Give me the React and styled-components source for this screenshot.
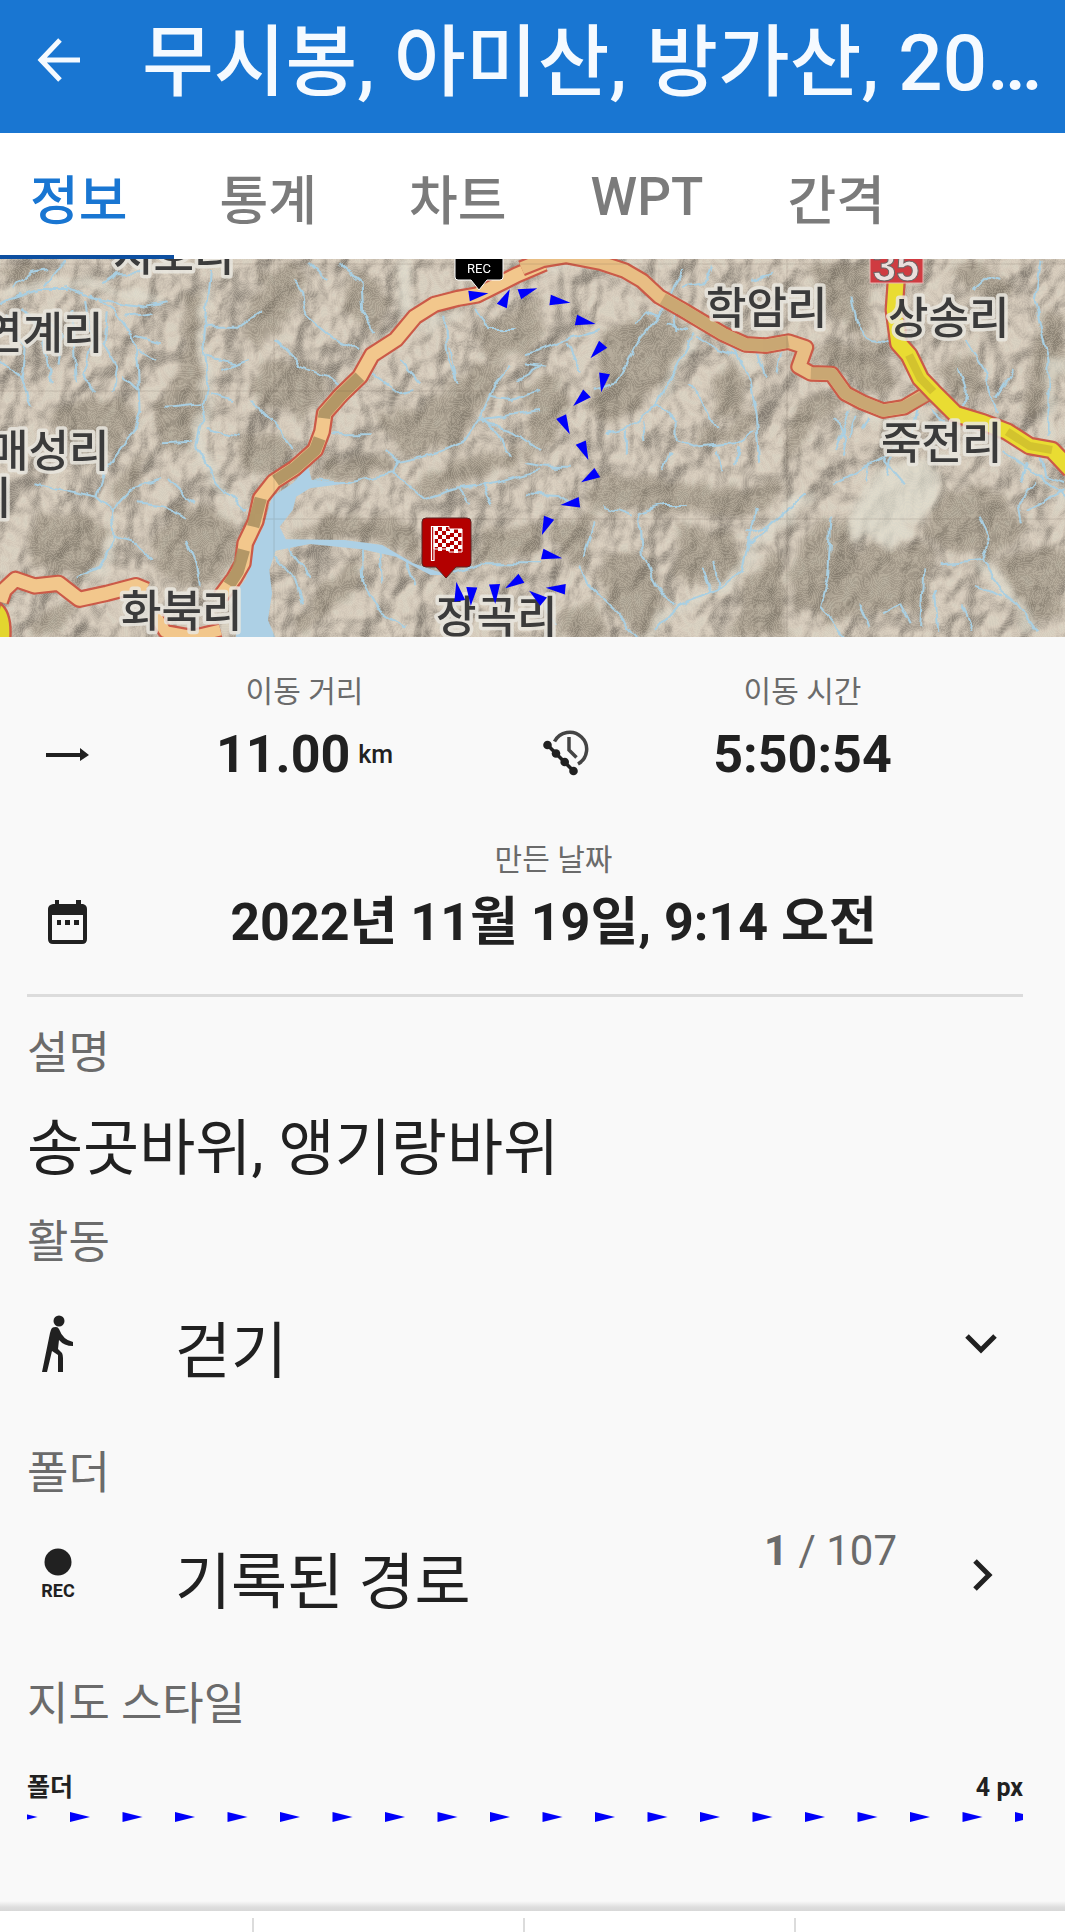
import React, { useState } from "react";
import styled, { createGlobalStyle } from "styled-components";

const ink = "#212121";
const muted = "#6b6b6b";
const blue = "#1976d2";

const GlobalStyle = createGlobalStyle`
  *, *::before, *::after { box-sizing: border-box; }
  body {
    margin: 0;
    background: #f9f9f9;
    color: ${ink};
    font-family: Roboto, "Noto Sans CJK KR", sans-serif;
  }
  h1, h2, p, dl, dd, dt { margin: 0; font-weight: 400; }
  button, select { font: inherit; color: inherit; background: none; border: 0; padding: 0; }
  svg { display: block; }
`;

const Header = styled.header`
  display: flex;
  align-items: center;
  gap: 60px;
  height: 133px;
  padding: 0 10px 14px 36px;
  background: ${blue};
  color: #f5faff;
`;

const BackButton = styled.button`
  flex: none;
  width: 46px;
  height: 46px;
`;

const Title = styled.h1`
  flex: 1;
  min-width: 0;
  padding-top: 8px;
  overflow: hidden;
  white-space: nowrap;
  font-size: 78px;
  line-height: 110px;
  font-weight: 500;
`;

const Tabs = styled.nav`
  display: flex;
  height: 126px;
  background: #fff;
  overflow: hidden;
`;

const Tab = styled.button`
  flex: none;
  padding: 6px ${(p) => (p.$latin ? 38 : 46)}px 0;
  border-bottom: 4px solid ${(p) => (p.$active ? "#0d4fa0" : "transparent")};
  color: ${(p) => (p.$active ? blue : "#7b7b7b")};
  font-size: 53px;
  font-weight: 500;

  &:first-child { padding-left: 30px; }
`;

const MapFrame = styled.section`
  svg { width: 100%; height: auto; }
`;

const Stats = styled.dl`
  display: grid;
  grid-template-columns: 1fr 1fr;
  row-gap: 62px;
  margin: 0 42px 0 27px;
  padding: 37px 0 46px;
  border-bottom: 3px solid #dcdcdc;
`;

const Stat = styled.div`
  grid-column: ${(p) => (p.$wide ? "1 / -1" : "auto")};
  display: grid;
  grid-template-columns: 44px 1fr;
  row-gap: 18px;
  padding: 0 5px 0 18px;
  align-items: center;
  text-align: center;
`;

const StatIcon = styled.dd`
  grid-row: 2;
`;

const StatLabel = styled.dt`
  grid-column: 2;
  color: ${muted};
  font-size: 30px;
  line-height: 36px;
`;

const StatValue = styled.dd`
  grid-column: 2;
  padding-top: 2px;
  font-size: 52px;
  line-height: 50px;
  font-weight: 700;
`;

const Unit = styled.span`
  margin-left: 8px;
  font-size: 25px;
  font-weight: 500;
  vertical-align: 9px;
  line-height: 1;
`;

const Details = styled.main`
  padding: 33px 42px 78px 27px;
`;

const SectionLabel = styled.h2`
  color: ${muted};
  font-size: 45px;
  line-height: 48px;
`;

const Description = styled.p`
  margin: 35px 0 34px;
  font-size: 61px;
  line-height: 72px;
`;

const Row = styled.div`
  display: flex;
  align-items: center;
  width: 100%;
  height: 154px;
  margin-bottom: 29px;
  padding-right: 26px;
  text-align: left;
`;

const RowIcon = styled.span`
  flex: none;
  display: flex;
  flex-direction: column;
  align-items: center;
  gap: 4px;
  width: 62px;
  margin-right: 86px;
  font-size: 18px;
  line-height: 22px;
  font-weight: 700;
`;

const RowSelect = styled.select`
  flex: 1;
  appearance: none;
  padding-top: 16px;
  font-size: 61px;
  line-height: 72px;
`;

const RowText = styled.span`
  flex: 1;
  padding-top: 16px;
  font-size: 61px;
  line-height: 72px;
`;

const Count = styled.span`
  margin-right: 74px;
  padding-bottom: 48px;
  color: ${muted};
  font-size: 42px;
  line-height: 48px;
`;

const StyleCaption = styled.div`
  display: flex;
  justify-content: space-between;
  margin: 43px 0 7px;
  font-size: 25px;
  line-height: 32px;
  font-weight: 700;
`;

const BottomShadow = styled.div`
  height: 10px;
  background: linear-gradient(#f9f9f9, #dedede 60%, #d8d8d8);
`;

const BottomBar = styled.footer`
  display: grid;
  grid-template-columns: 254fr 271fr 271fr 269fr;
  height: 22px;
  padding-top: 7px;
  background: #fff;
`;

const BottomCell = styled.div`
  border-right: 2px solid #dcdcdc;
  &:last-child { border-right: 0; }
`;

/* ---------- map drawing ---------- */

const roadWest =
  "M640 1040L680 985 705 940 712 880 742 815 757 745 795 695 855 655 915 600 935 545 943 490 990 435 1045 380 1080 315 1150 268 1205 200 1262 163 1330 145 1385 135 1430 112 1500 75 1580 40";
const roadFork = "M0 1055L12 1020 45 988 100 1008 170 1000 230 1048 310 1030 395 1007 425 1020";
const roadSouth = "M450 1095L480 1145 560 1160 640 1140";
const roadEast =
  "M-10 55L50 30 120 18 220 38 290 62 340 92 390 140 450 175 515 215 575 252 640 283 700 287 765 275 815 292 795 350 830 370 890 372 930 430 980 457 1040 482 1100 472 1165 432";
const highway =
  "M1078 90L1072 180 1085 280 1115 315 1148 385 1185 425 1250 492 1330 517 1400 545 1465 588 1530 600 1585 660";

const shadeWest = [
  "M540 120L590 140 580 300 590 420 560 600 500 620 440 540 450 480 520 360Z",
  "M700 250L760 60 860 40 900 100 840 180 800 240 740 290Z",
  "M1000 60L1060 60 1130 150 1100 240 1060 250 1000 160Z",
  "M760 330L860 330 960 400 880 520 800 480 720 440Z",
  "M1080 480L1220 480 1380 340 1480 330 1400 460 1340 580 1180 620 1120 560Z",
  "M930 640L1120 610 1140 660 1040 700 920 690Z",
  "M1180 720L1300 640 1520 590 1500 640 1360 700 1230 745Z",
  "M830 850L960 800 1140 800 1220 870 1200 930 1060 870 860 870Z",
  "M860 1090L960 990 1040 920 1050 1010 960 1090 860 1150Z",
  "M100 800L250 780 310 860 290 960 220 990 120 960 90 880Z",
  "M330 700L420 600 410 700 340 760Z",
  "M160 470L360 440 400 500 320 620 240 640 170 560Z",
  "M420 880L520 760 680 800 700 900 640 1000 560 1010 480 970Z",
  "M80 1150L140 1070 220 1060 200 1120 120 1165Z",
  "M600 880L660 840 660 980 600 1000Z",
  "M0 60L80 40 120 80 60 110Z",
  "M1380 960L1400 840 1568 830 1568 900 1480 930Z",
  "M1380 240L1568 140 1568 300 1420 330Z",
  "M700 560L820 540 840 640 760 680 700 640Z",
];
const shadeEast = [
  "M220 260L300 200 420 200 480 260 440 350 340 460 250 520 180 480 210 400Z",
  "M0 400L100 360 120 460 90 560 0 640Z",
  "M510 540L600 520 660 470 660 540 580 580 500 580Z",
  "M540 400L600 330 640 400 620 500 560 500Z",
  "M180 720L240 670 480 700 640 720 740 690 720 760 620 800 500 790 330 770 200 800Z",
  "M60 830L200 790 180 900 160 950 100 900Z",
  "M760 960L850 810 930 820 960 900 1140 880 1180 900 1160 1100 1040 1080 900 1120 840 1080 780 1100Z",
  "M780 480L860 420 960 460 860 500 760 640Z",
  "M830 320L900 270 1020 320 1080 400 1040 450 960 400Z",
  "M820 60L1000 30 1000 240 940 250 880 160Z",
  "M960 260L1060 280 1050 330 980 290Z",
  "M1180 780L1300 690 1380 740 1460 830 1400 900 1320 920 1240 900 1160 860Z",
  "M1460 330L1520 160 1568 200 1568 320 1500 480 1450 520Z",
  "M1220 60L1330 40 1420 120 1380 160Z",
  "M200 960L260 900 360 920 400 1040 380 1140 300 1140 220 1030Z",
  "M450 820L600 860 640 940 560 1010 440 980Z",
  "M640 980L740 900 760 1160 600 1160Z",
  "M1200 360L1300 300 1340 420 1250 460Z",
  "M1370 930L1568 880 1568 1100 1440 1120Z",
  "M100 1100L200 1040 260 1160 80 1165Z",
];

const valleyWest = [
  "M0 150L80 110 190 90 260 110 330 120 480 160",
  "M600 120L585 260 600 400 575 580 620 690 715 780",
  "M1170 30L1175 190",
  "M240 980L300 960 330 870",
  "M1100 270L1330 190",
];
const valleyEast = [
  "M500 220L480 280 385 460",
  "M560 240L640 350",
  "M900 560L960 500 1100 490 1160 500",
  "M1400 600L1500 680 1568 760",
  "M1330 920L1400 1030 1480 1140",
  "M340 1160L430 1070 580 1010 700 860 830 720",
  "M0 50L140 30 240 50",
  "M1568 330L1520 360 1520 560",
];

const streamsWest = [
  "M190 110L240 130 300 150 420 170 490 160",
  "M130 110L190 30",
  "M20 150L110 120 200 120",
  "M0 160L60 130M40 110L90 70 140 60M300 100L340 70 420 70",
  "M610 60L590 260 605 400 570 590 630 700 715 780",
  "M260 130L330 180 380 250 400 330 405 480 390 540 300 670 280 740 325 780 330 870 290 950 220 980",
  "M100 700L190 720 280 740",
  "M325 780L380 720 470 690",
  "M590 230L690 230 760 180",
  "M980 40L1050 100 1055 190 1090 250",
  "M850 90L880 130 890 200 960 260 1040 300",
  "M800 270L860 330 870 350 950 380 1000 420",
  "M730 450L800 520 850 600",
  "M905 690L1010 700 1140 670 1160 635 1270 610 1350 570 1390 510 1440 400 1480 350",
  "M1120 600L1160 635",
  "M1140 670L1230 745 1330 715 1440 700 1568 660",
  "M1390 510L1480 540 1568 600",
  "M1390 510L1568 480",
  "M1420 440L1480 450 1568 420M1400 500L1450 560 1480 620M1330 715L1360 760M1400 700L1430 760",
  "M960 550L1080 550",
  "M1385 170L1420 240 1500 240",
  "M1290 200L1300 320 1330 400",
  "M1330 400L1310 290",
  "M1050 890L1055 1000 1100 1080 1180 1130",
  "M540 870L570 940 580 1010",
  "M1320 970L1400 940 1568 940",
  "M60 170L120 250 150 400",
  "M0 330L60 380 90 470",
  "M210 180L220 400",
  "M20 200L70 290 60 380M130 200L180 260 170 350M250 150L270 280 240 370 280 430M310 190L300 280 340 350 330 420",
  "M370 200L440 190M390 260L470 280M400 300L450 330M400 420L360 380",
  "M470 580L560 575M480 470L590 460M610 430L680 450M600 540L690 560M600 320L680 340",
  "M1080 370L1160 430 1200 420M1160 330L1220 400M1500 390L1568 350",
  "M900 40L950 90",
  "M640 360L720 330",
  "M490 690L560 760",
  "M800 920L860 990 880 1060M840 900L900 980M1100 890L1110 1000M1180 930L1200 1000",
  "M330 860L400 880 440 930M400 760L480 770 540 800",
];
const streamsEast = [
  "M460 60L430 110 400 180 320 290 270 400 200 420",
  "M490 250L450 330 385 460 300 530 240 550",
  "M385 460L440 520 440 570 490 590 610 580 665 540",
  "M600 290L650 380 670 500 680 640",
  "M480 400L530 480 560 540",
  "M390 200L350 180 320 220M410 220L470 240M430 190L440 240M500 260L560 300 620 320M680 310L700 380M740 310L730 370",
  "M945 140L960 220 1000 270 1080 280",
  "M1280 270L1340 370 1370 490",
  "M1260 350L1280 420 1270 480M1300 120L1340 80 1380 90M1420 360L1370 440",
  "M1500 30L1480 150 1520 330 1520 560",
  "M0 310L120 270 220 240",
  "M120 280L160 370",
  "M0 730L100 735 130 760M0 640L60 650 130 650M0 340L60 350",
  "M1140 480L1120 560 1030 630 900 700",
  "M1040 620L1100 700M1000 640L990 700M1060 620L1050 680",
  "M940 480L900 600",
  "M900 510L930 560 920 620M960 500L940 560M1000 500L980 540M1180 480L1220 520",
  "M1390 600L1568 740",
  "M1460 640L1440 700M1500 620L1510 680 1568 700M1480 700L1430 760 1440 820",
  "M1320 800L1350 860 1330 930 1380 1020 1430 1060 1490 1150",
  "M1330 930L1210 940",
  "M330 790L400 765 470 765",
  "M330 790L340 920 380 1000 430 1070",
  "M160 950L180 1000 260 1080 330 1160",
  "M380 1140L440 1070 560 1020 630 960 650 880 740 800 820 730",
  "M510 950L540 1030M550 930L560 1020M640 850L700 830M670 780L650 880",
  "M290 540L290 620M340 510L350 570M420 610L400 660M560 600L570 670M620 590L610 640",
  "M890 800L880 980 860 1070 930 1160",
  "M1160 960L1150 1130",
  "M970 1060L1000 1130M1040 1090L1090 1060 1120 1120M1190 1020L1200 1140M1270 1060L1300 1140",
  "M1460 780L1568 720",
  "M1310 1010L1390 1040",
  "M540 50L520 100 450 110",
  "M660 90L720 70",
  "M200 820L170 920M230 770L310 800M60 1060L90 1130",
];

/* each entry: base centre x, y, then tip x, y */
const arrowsWest = [
  [1362, 138, 1418, 130],
  [1457, 168, 1480, 118],
  [1508, 133, 1560, 115],
  [1335, 1053, 1325, 995],
  [1370, 1012, 1367, 1068],
  [1436, 1003, 1438, 1062],
  [1514, 985, 1467, 1015],
];
const arrowsEast = [
  [73, 150, 132, 158],
  [148, 210, 205, 222],
  [227, 283, 190, 325],
  [231, 370, 221, 427],
  [180, 430, 140, 468],
  [105, 500, 130, 553],
  [162, 578, 184, 630],
  [210, 668, 163, 697],
  [158, 757, 103, 765],
  [70, 803, 49, 855],
  [50, 912, 108, 925],
  [117, 1018, 60, 1013],
  [54, 1055, 12, 1022],
];

const places = [
  ["지호리", 113, 12],
  ["연계리", -18, 90],
  ["매성리", -12, 208],
  ["리", -29, 255],
  ["화북리", 121, 368],
  ["장곡리", 436, 374],
  ["학암리", 706, 65],
  ["상송리", 888, 75],
  ["죽전리", 881, 200],
];

function Arrow({ at: [x1, y1, x2, y2] }) {
  const len = Math.hypot(x2 - x1, y2 - y1);
  const nx = (-(y2 - y1) / len) * 16;
  const ny = ((x2 - x1) / len) * 16;
  return <polygon points={`${x1 + nx},${y1 + ny} ${x2},${y2} ${x1 - nx},${y1 - ny}`} />;
}

function Strokes({ paths }) {
  return paths.map((d) => <path key={d} d={d} />);
}

function Road({ d, width, color }) {
  return (
    <g fill="none" strokeLinejoin="round">
      <path d={d} stroke="#cb5a48" strokeWidth={width} />
      <path d={d} stroke={color} strokeWidth={width - 13} />
    </g>
  );
}

const westSheet = "translate(0 -9) scale(.3444 .3333)";
const eastSheet = "translate(525 -9) scale(.3444 .3333)";
const contourSteps = Array.from({ length: 90 }, (_, i) => (i % 2 ? 1 : 0)).join(" ");

function RouteMap() {
  const checks = [];
  for (let r = 0; r < 6; r++)
    for (let c = 0; c < 7; c++)
      if ((r + c) % 2 === 0) checks.push([434 + c * 4, 268 + r * 4 + (c > 3 ? 2 : 0)]);
  return (
    <svg viewBox="0 0 1065 378" role="img" aria-label="경로 지도">
      <defs>
        <filter id="relief" x="0" y="0" width="100%" height="100%" colorInterpolationFilters="sRGB">
          <feTurbulence type="fractalNoise" baseFrequency=".026 .02" numOctaves="3" seed="11" />
          <feColorMatrix values="0 0 0 0 0  0 0 0 0 0  0 0 0 0 0  1 0 0 0 0" />
          <feDiffuseLighting surfaceScale="20" diffuseConstant="1.1" lightingColor="#f4eadc">
            <feDistantLight azimuth="225" elevation="52" />
          </feDiffuseLighting>
        </filter>
        <filter id="contours" x="0" y="0" width="100%" height="100%" colorInterpolationFilters="sRGB">
          <feTurbulence type="fractalNoise" baseFrequency=".026 .02" numOctaves="2" seed="11" />
          <feColorMatrix values="0 0 0 0 .93  0 0 0 0 .89  0 0 0 0 .82  1 0 0 0 0" />
          <feComponentTransfer>
            <feFuncA type="discrete" tableValues={contourSteps} />
          </feComponentTransfer>
        </filter>
        <filter id="soft" x="-10%" y="-10%" width="120%" height="120%">
          <feTurbulence type="fractalNoise" baseFrequency=".05" numOctaves="2" seed="4" result="n" />
          <feDisplacementMap in="SourceGraphic" in2="n" xChannelSelector="R" yChannelSelector="G" scale="22" />
          <feGaussianBlur stdDeviation="3" />
        </filter>
        <filter id="wander">
          <feTurbulence type="fractalNoise" baseFrequency=".06" numOctaves="2" seed="7" result="n" />
          <feDisplacementMap in="SourceGraphic" in2="n" xChannelSelector="R" yChannelSelector="G" scale="9" />
        </filter>
      </defs>
      <rect width="1065" height="378" fill="#c4b9aa" />
      <rect width="1065" height="378" filter="url(#relief)" opacity=".3" />
      <g filter="url(#soft)" fill="#857b6c" opacity=".55">
        <g transform={westSheet}><Strokes paths={shadeWest} /></g>
        <g transform={eastSheet}><Strokes paths={shadeEast} /></g>
      </g>
      <g filter="url(#soft)" fill="none" stroke="#dedccf" strokeWidth="26" opacity=".75">
        <g transform={westSheet}><Strokes paths={valleyWest} /></g>
        <g transform={eastSheet}>
          <Strokes paths={valleyEast} />
          <path fill="#dedccf" d="M940 840L1020 680 1160 640 1200 700 1140 800 1060 880Z" />
        </g>
      </g>
      <rect width="1065" height="378" filter="url(#contours)" opacity=".2" />
      <g filter="url(#wander)" fill="none" stroke="#a9cfe2" strokeLinejoin="round" strokeWidth="6">
        <g transform={westSheet}><Strokes paths={streamsWest} /></g>
        <g transform={eastSheet}><Strokes paths={streamsEast} /></g>
      </g>
      <g transform={westSheet}>
        <path
          fill="#add0e5"
          d="M895 650L905 690 1010 700 900 715 860 740 850 780 812 830 830 868 1000 870 1110 885 1200 940 1300 975 1250 975 1150 920 1050 898 900 882 800 902 782 960 790 1030 778 1110 800 1165 685 1165 690 1020 715 985 730 900 765 830 790 740 850 700Z"
        />
        <Road d={roadFork} width={52} color="#f2c78c" />
        <Road d={roadSouth} width={46} color="#f2c78c" />
        <path d="M0 1060Q35 1085 30 1165L-20 1165Z" fill="#e3d62f" stroke="#cb5a48" strokeWidth="7" />
        <Road d={roadWest} width={52} color="#f2c78c" />
        <g fill="none" stroke="#a98f60" strokeWidth="36" strokeLinejoin="round" opacity=".85">
          <path d="M665 1005L690 965 708 900" />
          <path d="M735 830L757 745" />
          <path d="M800 692L855 655 915 600 928 565" />
          <path d="M941 505L943 490 990 435 1045 380" />
        </g>
      </g>
      <g transform={eastSheet}>
        <Road d={roadEast} width={50} color="#e8be84" />
        <g fill="none" stroke="#bd9e6c" strokeWidth="36" strokeLinejoin="round" opacity=".7">
          <path d="M400 147L450 175 515 215 575 252 640 283 700 287 765 275" />
          <path d="M830 370L890 372 930 430 980 457 1040 482 1100 472 1165 436" />
        </g>
        <Road d={highway} width={56} color="#e9dc32" />
        <path d="M1115 315L1148 385 1185 425M1400 545L1465 588 1530 600" fill="none" stroke="#c9b82c" strokeWidth="24" opacity=".7" />
      </g>
      <path d="M274 0V378M262 260H1065M0 5H1065M787 0V378M0 132H540" stroke="#4a443a" strokeWidth="1" opacity=".16" />
      <rect x="870" y="-10" width="53" height="34" fill="#cf3b41" stroke="#e7b6b2" />
      <text x="896" y="22" textAnchor="middle" fontFamily="Liberation Sans, sans-serif" fontWeight="700" fontSize="42" fill="#eadfdd" stroke="#6b6263" strokeWidth="1">35</text>
      <g
        fontFamily="Noto Sans CJK KR, sans-serif"
        fontWeight="500"
        fontSize="44"
        fill="#3b3b3b"
        stroke="#e9e6df"
        strokeOpacity=".85"
        strokeWidth="7"
        strokeLinejoin="round"
        paintOrder="stroke"
      >
        {places.map(([name, x, y]) => (
          <text key={name} x={x} y={y}>{name}</text>
        ))}
      </g>
      <path d="M455 -8H503V18Q503 21 500 21H487L479 31 471 21H458Q455 21 455 18Z" fill="#000" stroke="#fff" strokeWidth="1" />
      <text x="479" y="14" textAnchor="middle" fontSize="13" fill="#fff">REC</text>
      <path d="M426 259H467Q471 259 471 263V304Q471 308 467 308H456L446 319 436 308H426Q422 308 422 304V263Q422 259 426 259Z" fill="#b30000" stroke="#5a2424" strokeWidth="1" />
      <path d="M431.500 267.500V301.500H434V267.500Z" fill="none" stroke="#fff" strokeWidth="1.200" />
      <path d="M434 267.500H449V270H462V293H449V290H434Z" fill="none" stroke="#fff" strokeWidth="1" />
      {checks.map(([x, y]) => (
        <rect key={`${x}-${y}`} x={x} y={y} width="4" height="4" fill="#fff" />
      ))}
      <g fill="#0000fa">
        <g transform={westSheet}>{arrowsWest.map((a) => <Arrow key={a.join()} at={a} />)}</g>
        <g transform={eastSheet}>{arrowsEast.map((a) => <Arrow key={a.join()} at={a} />)}</g>
      </g>
    </svg>
  );
}

/* ---------- icons ---------- */

const BackIcon = () => (
  <svg width="46" height="46" viewBox="0 0 46 46" fill="none" stroke="currentColor" strokeWidth="5">
    <path d="M44 23H6M24 3L5 23 24 43" />
  </svg>
);

const DistanceIcon = () => (
  <svg width="44" height="44" viewBox="0 0 44 44" fill={ink}>
    <path d="M1 21H35V16L44 23 35 29V25H1Z" />
  </svg>
);

const MovingTimeIcon = () => (
  <svg width="46" height="48" viewBox="0 0 46 48" fill="none" stroke={ink} strokeWidth="3.500">
    <path d="M11.500 11.500A17 17 0 1 1 35 34" stroke="#444" />
    <path d="M26 7V20L33.500 27.500" stroke="#444" />
    <path d="M4.500 15L30.500 41" />
    <g fill={ink} stroke="none">
      <circle cx="4.500" cy="15" r="4.300" />
      <circle cx="13" cy="23.500" r="4.300" />
      <circle cx="21.700" cy="32" r="4.300" />
      <circle cx="30.500" cy="41" r="4.300" />
    </g>
  </svg>
);

const CalendarIcon = () => (
  <svg width="44" height="44" viewBox="0 0 44 44">
    <path fillRule="evenodd" fill={ink} d="M10 0H14V4H31V0H36V4H38Q42 5 42 9V39Q42 44 37 44H8Q3 44 3 39V9Q3 5 8 4H10ZM7 15V40H38V15Z" />
    <path fill={ink} d="M12 20H16V25H12ZM20 20H25V25H20ZM29 20H34V25H29Z" />
  </svg>
);

const WalkIcon = () => (
  <svg width="34" height="58" viewBox="0 0 34 58" fill={ink}>
    <circle cx="18" cy="6" r="5.500" />
    <path d="M11 13Q12 12 15 12Q17 12 18 14Q22 25 32 27V31Q23 31 18 25L17 34 21 38Q22 40 22 43V57H17V40L11 36 6 57H1L9 18Q10 14 11 13Z" />
  </svg>
);

const ChevronDown = () => (
  <svg width="32" height="20" viewBox="0 0 32 20" fill="none" stroke={ink} strokeWidth="5">
    <path d="M2 2L16 16 30 2" />
  </svg>
);

const ChevronRight = () => (
  <svg width="26" height="32" viewBox="0 0 26 32" fill="none" stroke={ink} strokeWidth="5">
    <path d="M4 2L18 16 4 30" />
  </svg>
);

const RecordDot = () => (
  <svg width="28" height="28" viewBox="0 0 28 28" fill={ink}>
    <circle cx="14" cy="14" r="13.500" />
  </svg>
);

const LinePreview = () => (
  <svg width="100%" height="12" aria-hidden="true">
    <defs>
      <pattern id="track" x="-9.500" width="52.500" height="12" patternUnits="userSpaceOnUse">
        <path d="M0 1L20 6 0 11Z" fill="#0000fa" />
      </pattern>
    </defs>
    <rect width="100%" height="12" fill="url(#track)" />
  </svg>
);

const tabNames = ["정보", "통계", "차트", "WPT", "간격"];

export default function App() {
  const [tab, setTab] = useState("정보");
  return (
    <>
      <GlobalStyle />
      <Header>
        <BackButton aria-label="뒤로"><BackIcon /></BackButton>
        <Title>무시봉, 아미산, 방가산, 20…</Title>
      </Header>
      <Tabs role="tablist">
        {tabNames.map((name) => (
          <Tab
            key={name}
            role="tab"
            aria-selected={tab === name}
            $active={tab === name}
            $latin={name === "WPT"}
            onClick={() => setTab(name)}
          >
            {name}
          </Tab>
        ))}
      </Tabs>
      <MapFrame><RouteMap /></MapFrame>
      <Stats>
        <Stat>
          <StatLabel>이동 거리</StatLabel>
          <StatIcon><DistanceIcon /></StatIcon>
          <StatValue>11.00<Unit>km</Unit></StatValue>
        </Stat>
        <Stat>
          <StatLabel>이동 시간</StatLabel>
          <StatIcon><MovingTimeIcon /></StatIcon>
          <StatValue>5:50:54</StatValue>
        </Stat>
        <Stat $wide>
          <StatLabel>만든 날짜</StatLabel>
          <StatIcon><CalendarIcon /></StatIcon>
          <StatValue>2022년 11월 19일, 9:14 오전</StatValue>
        </Stat>
      </Stats>
      <Details>
        <SectionLabel>설명</SectionLabel>
        <Description>송곳바위, 앵기랑바위</Description>
        <SectionLabel id="activity-label">활동</SectionLabel>
        <Row>
          <RowIcon><WalkIcon /></RowIcon>
          <RowSelect aria-labelledby="activity-label" defaultValue="walk">
            <option value="walk">걷기</option>
          </RowSelect>
          <ChevronDown />
        </Row>
        <SectionLabel>폴더</SectionLabel>
        <Row as="button">
          <RowIcon><RecordDot />REC</RowIcon>
          <RowText>기록된 경로</RowText>
          <Count><b>1</b> / 107</Count>
          <ChevronRight />
        </Row>
        <SectionLabel>지도 스타일</SectionLabel>
        <StyleCaption><span>폴더</span><span>4 px</span></StyleCaption>
        <LinePreview />
      </Details>
      <BottomShadow />
      <BottomBar>
        <BottomCell /><BottomCell /><BottomCell /><BottomCell />
      </BottomBar>
    </>
  );
}
